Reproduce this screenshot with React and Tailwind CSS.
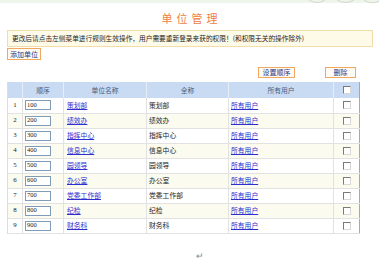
import React from 'react'

const rows = [
  [1, '100', '策划部'],
  [2, '200', '绩效办'],
  [3, '300', '指挥中心'],
  [4, '400', '信息中心'],
  [5, '500', '园领导'],
  [6, '600', '办公室'],
  [7, '700', '党委工作部'],
  [8, '800', '纪检'],
  [9, '900', '财务科'],
]

const Check = () => (
  <span className="inline-block w-[8px] h-[8px] border border-t-[#7a7a7a] border-l-[#7a7a7a] border-b-[#d8d8d8] border-r-[#d8d8d8] bg-white align-middle" />
)

const Btn = ({ children, className = '' }) => (
  <span className={`flex items-center justify-center h-[11px] border border-[#f0a860] bg-[#fdfbf4] text-[#1f3a8a] text-[7px] leading-none ${className}`}>
    {children}
  </span>
)

export default function App() {
  return (
    <div className="w-[379px] h-[261px] bg-white overflow-hidden leading-none font-['Noto_Sans_CJK_SC','Liberation_Sans',sans-serif] text-[#333]">
      {/* top decoration */}
      <svg width="379" height="5" className="block">
        <rect x="0" y="0" width="379" height="3" fill="#eef5ea" />
        <path d="M309 0 Q317 5 325 0" stroke="#c9cfc6" strokeWidth="0.8" fill="none" />
        <path d="M337 0 Q345 5 354 0" stroke="#c9cfc6" strokeWidth="0.8" fill="none" />
        <path d="M364 0 Q372 5 379 1" stroke="#c9cfc6" strokeWidth="0.8" fill="none" />
      </svg>

      {/* title */}
      <div className="mt-[7px] h-[13px] flex justify-center text-[11px] leading-[13px] tracking-[4px] text-[#f08040] pl-[4px]">
        单位管理
      </div>

      {/* notice */}
      <div className="mt-[5px] mx-[7px] w-[366px] h-[17px] flex items-center pl-[4px] border border-[#f2dca8] bg-[#fffbe9] text-[6.7px] leading-none text-[#222] whitespace-nowrap">
        更改后请点击左侧菜单进行规则生效操作，用户需要重新登录来获的权限！(和权限无关的操作除外)
      </div>

      <div className="ml-[7px] mt-[1px] flex">
        <Btn className="w-[34px] h-[12px]">添加单位</Btn>
      </div>

      {/* action buttons */}
      <div className="mt-[7px] flex h-[11px]">
        <Btn className="ml-[258px] w-[37px]">设置顺序</Btn>
        <Btn className="ml-[30px] w-[31px]">删除</Btn>
      </div>

      <table className="mt-[4px] ml-[7px] w-[352px] table-fixed border-collapse text-[6.8px] leading-none border-l border-l-[#dcdcdc] border-r border-r-[#a8a8a8]">
        <colgroup>
          <col className="w-[15px]" />
          <col className="w-[41px]" />
          <col className="w-[83px]" />
          <col className="w-[82px]" />
          <col className="w-[105px]" />
          <col className="w-[26px]" />
        </colgroup>
        <thead>
          <tr className="h-[16px] bg-[#c8dbf2] text-[#4b5d7e]">
            <th className="p-0 font-normal border-r border-[#e6edf6]"></th>
            <th className="p-0 font-normal border-r border-[#e6edf6]">顺序</th>
            <th className="p-0 font-normal border-r border-[#e6edf6]">单位名称</th>
            <th className="p-0 font-normal border-r border-[#e6edf6]">全称</th>
            <th className="p-0 font-normal border-r border-[#e6edf6]">所有用户</th>
            <th className="p-0 font-normal"><Check /></th>
          </tr>
        </thead>
        <tbody>
          {rows.map(([n, order, name], i) => (
            <tr key={n} className={`h-[15px] border-b border-[#e2e2e2] ${i % 2 ? 'bg-[#fbfbef]' : 'bg-white'}`}>
              <td className="p-0 text-center font-['Liberation_Serif',serif] text-[#222] border-r border-[#e2e2e2]">{n}</td>
              <td className="p-0 pl-[2px] border-r border-[#e2e2e2]">
                <span className="flex items-center w-[26px] h-[10px] pl-[1px] border border-[#7f9db9] bg-white text-[#222] text-[6.5px] font-['Liberation_Serif',serif]">{order}</span>
              </td>
              <td className="p-0 pl-[3px] border-r border-[#e2e2e2]">
                <span className="text-[#2d2dd0] underline">{name}</span>
              </td>
              <td className="p-0 pl-[2px] text-[#222] border-r border-[#e2e2e2]">{name}</td>
              <td className="p-0 pl-[2px] border-r border-[#e2e2e2]">
                <span className="text-[#2d2dd0] underline">所有用户</span>
              </td>
              <td className="p-0 text-center"><Check /></td>
            </tr>
          ))}
        </tbody>
      </table>

      <div className="mt-[17px] pl-[196px] text-[9px] leading-none text-[#888]">↵</div>
    </div>
  )
}
